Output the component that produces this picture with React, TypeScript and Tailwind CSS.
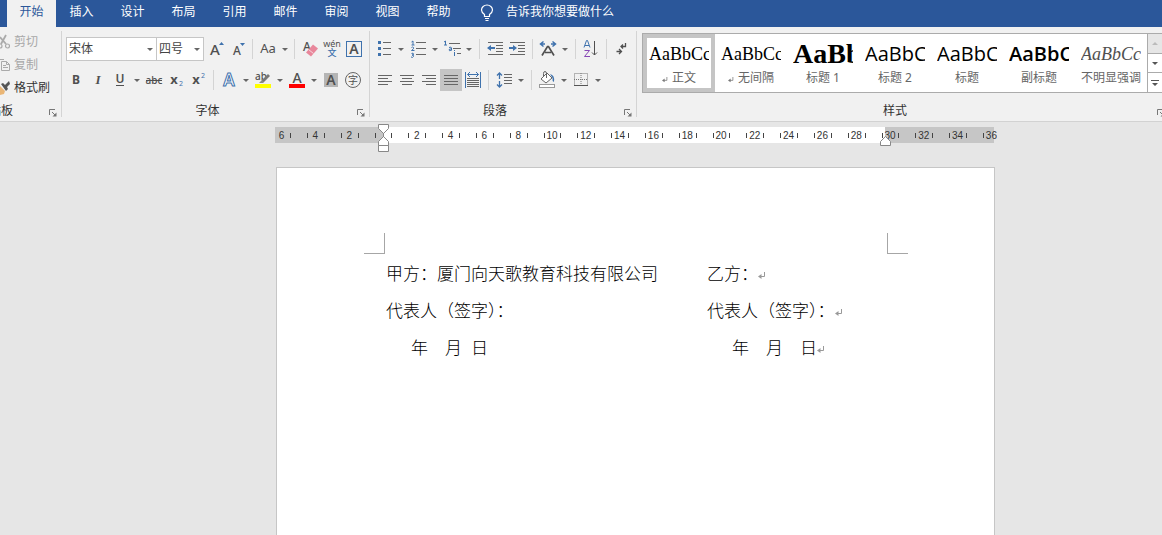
import type { ReactNode } from "react";

const UI = "font-['Noto_Sans','Noto_Sans_CJK_SC',sans-serif]";
const INK = "#505050";
const BLUE = "#3f72ad";

function Icon({ children, w = 22 }: { children: ReactNode; w?: number }) {
  return (
    <svg width={w} height={22} viewBox={`0 0 ${w} 22`} fill="none" className="shrink-0" aria-hidden="true">
      {children}
    </svg>
  );
}

function Caret() {
  return (
    <svg width={12} height={22} viewBox="0 0 12 22" className="shrink-0" aria-hidden="true">
      <path d="M3 10h6l-3 3z" fill="#666" />
    </svg>
  );
}

function Tool({ label, children, caret, active }: { label: string; children: ReactNode; caret?: boolean; active?: boolean }) {
  return (
    <button type="button" aria-label={label} className={`flex h-[22px] shrink-0 items-center ${active ? "bg-[#c5c5c5]" : "hover:bg-[#dcdcdc]"}`}>
      <Icon>{children}</Icon>
      {caret && <Caret />}
    </button>
  );
}

function Sep() {
  return <span className="mx-1 h-[20px] w-px shrink-0 bg-[#d4d4d4]" />;
}

function Launcher({ label }: { label: string }) {
  return (
    <button type="button" aria-label={label} className="flex w-4 shrink-0 justify-center pt-1">
      <svg width={8} height={8} viewBox="0 0 8 8" fill="none" aria-hidden="true">
        <path d="M.5 6V.5H6M3 3l3 3" stroke="#777" />
        <path d="M7.500 3.500v4h-4z" fill="#777" />
      </svg>
    </button>
  );
}

function GroupLabel({ children }: { children: string }) {
  return (
    <div className="flex h-[18px] items-center">
      <span className="flex-1 text-center">{children}</span>
      <Launcher label={`${children}设置`} />
    </div>
  );
}

function Divider() {
  return <div className="mt-1 mb-1 w-px shrink-0 bg-[#d4d4d4]" />;
}

function Combo({ label, value, className }: { label: string; value: string; className: string }) {
  return (
    <label className={`grid h-6 shrink-0 items-center border border-[#c6c6c6] bg-white ${className}`}>
      <span className="sr-only">{label}</span>
      <select defaultValue={value} className="col-start-1 row-start-1 h-[22px] w-full appearance-none bg-transparent pl-0.5 text-[12px] text-[#444] outline-none">
        <option>{value}</option>
      </select>
      <span className="pointer-events-none col-start-1 row-start-1 justify-self-end">
        <Caret />
      </span>
    </label>
  );
}

function Lines({ rows }: { rows: number[][] }) {
  return (
    <>
      {rows.map(([x, y, w], i) => (
        <rect key={i} x={x} y={y} width={w} height={1} fill="#666" />
      ))}
    </>
  );
}

function Glyph({ x, y, size, children, weight = 400, color = INK }: { x: number; y: number; size: number; children: string; weight?: number; color?: string }) {
  return (
    <text x={x} y={y} fontSize={size} fontWeight={weight} fill={color} textAnchor="middle">
      {children}
    </text>
  );
}

function Header() {
  const tabs = ["插入", "设计", "布局", "引用", "邮件", "审阅", "视图", "帮助"];
  return (
    <nav className="flex h-[27px] bg-[#2b579a] pl-[7px] text-[12px] text-white">
      <button type="button" className="h-full w-[49px] shrink-0 bg-[#f1f1f1] pb-1 text-[#2b579a]">开始</button>
      {tabs.map((t) => (
        <button type="button" key={t} className="h-full w-[51px] shrink-0 pb-1">{t}</button>
      ))}
      <button type="button" className="ml-4 flex shrink-0 items-center gap-3 pb-1">
        <svg width={14} height={18} viewBox="0 0 14 18" fill="none" stroke="white" className="mt-0.5" aria-hidden="true">
          <path d="M4.500 12.500v-2C2.500 9 1.500 7.800 1.500 6a5.500 5 0 0 1 11 0c0 1.800-1 3-3 4.500v2zM5 14.500h4M5.500 16.500h3" strokeWidth="1.200" />
        </svg>
        告诉我你想要做什么
      </button>
    </nav>
  );
}

function ClipboardGroup() {
  return (
    <section className="flex w-[61px] shrink-0 flex-col overflow-hidden pt-[3px]">
      <button type="button" className="flex h-[23px] items-center gap-1 text-[#a8a8a8]">
        <svg width={10} height={16} viewBox="0 0 10 16" fill="none" stroke="#aaa" strokeWidth="1.200" aria-hidden="true">
          <path d="M6 1 1 10M0 3l6 7" strokeWidth="1.800" />
          <circle cx="7.500" cy="12" r="2" />
          <circle cx="0" cy="12" r="2" />
        </svg>
        剪切
      </button>
      <button type="button" className="flex h-[23px] items-center gap-1 text-[#a8a8a8]">
        <svg width={10} height={16} viewBox="0 0 10 16" fill="none" stroke="#aaa" aria-hidden="true">
          <path d="M1.500 4.500h5l3 3v6h-8zM6.500 4.500v3h3M0 2.500h4M3 8.500h3M3 10.500h5" />
        </svg>
        复制
      </button>
      <button type="button" className="flex h-[23px] items-center gap-1 text-[#333]">
        <svg width={10} height={16} viewBox="0 0 10 16" aria-hidden="true">
          <path d="M0 6l5 5-1 3-4 1z" fill="#eab676" />
          <path d="M1 4l2-1 2 2 4-4 1 3-3 3 1 2-2 2z" fill="#555" />
        </svg>
        格式刷
      </button>
      <div className="mt-[3px] flex h-[18px] items-center">
        <span className="flex w-[13px] shrink-0 justify-end overflow-hidden whitespace-nowrap">剪贴板</span>
        <span className="flex-1" />
        <Launcher label="剪贴板设置" />
      </div>
    </section>
  );
}

function FontGroup() {
  return (
    <section className="flex w-[307px] shrink-0 flex-col pt-[11px]">
      <div className="flex h-[22px] items-center pl-1">
        <Combo label="字体" value="宋体" className="w-[91px]" />
        <Combo label="字号" value="四号" className="w-[47px] border-l-0" />
        <Tool label="增大字号">
          <Glyph x={11} y={17} size={15} weight={500}>A</Glyph>
          <path d="M15 7h5l-2.500-3z" fill={BLUE} />
        </Tool>
        <Tool label="减小字号">
          <Glyph x={11} y={17} size={12} weight={500}>A</Glyph>
          <path d="M14 5h5l-2.500 3z" fill={BLUE} />
        </Tool>
        <Sep />
        <button type="button" aria-label="更改大小写" className="flex h-[22px] w-[33px] shrink-0 items-center">
          <Icon>
            <Glyph x={11} y={15} size={13}>Aa</Glyph>
          </Icon>
          <Caret />
        </button>
        <Sep />
        <Tool label="清除格式">
          <Glyph x={8} y={13} size={12} weight={500}>A</Glyph>
          <path d="m14 6.500 5 4-7 8-5-4z" fill="#e8879b" />
          <path d="m9.500 11.500 5 4" stroke="#f8d5dc" />
        </Tool>
        <Tool label="拼音指南">
          <Glyph x={11} y={9} size={9}>wén</Glyph>
          <Glyph x={11} y={18} size={9} weight={500} color={BLUE}>文</Glyph>
        </Tool>
        <Tool label="字符边框">
          <rect x="3.500" y="3.500" width="15" height="15" stroke={BLUE} />
          <Glyph x={11} y={16} size={14} weight={600}>A</Glyph>
        </Tool>
      </div>
      <div className="mt-[9px] flex h-[22px] items-center pl-[3px]">
        <Tool label="加粗"><Glyph x={11} y={15} size={12} weight={700}>B</Glyph></Tool>
        <Tool label="倾斜">
          <text x={11} y={15} fontSize={13} fontStyle="italic" fontWeight={700} fill={INK} textAnchor="middle" fontFamily="Liberation Serif">I</text>
        </Tool>
        <Tool label="下划线" caret>
          <Glyph x={11} y={14} size={12} weight={600}>U</Glyph>
          <path d="M7 16.500h8" stroke={INK} />
        </Tool>
        <Tool label="删除线">
          <Glyph x={11} y={15} size={10} weight={500}>abc</Glyph>
          <path d="M3 11.500h16" stroke={INK} />
        </Tool>
        <Tool label="下标">
          <Glyph x={9} y={15} size={13} weight={700}>x</Glyph>
          <Glyph x={16} y={17} size={7} color={BLUE}>2</Glyph>
        </Tool>
        <Tool label="上标">
          <Glyph x={9} y={15} size={13} weight={700}>x</Glyph>
          <Glyph x={16} y={9} size={7} color={BLUE}>2</Glyph>
        </Tool>
        <Sep />
        <Tool label="文本效果" caret>
          <text x={11} y={17} fontSize={17} fontWeight={600} fill="#fff" stroke={BLUE} textAnchor="middle">A</text>
        </Tool>
        <Tool label="突出显示颜色" caret>
          <Glyph x={9} y={11} size={10} weight={500}>ab</Glyph>
          <path d="m10 11 6-6 2 2-6 6-3 1z" fill="#777" />
          <path d="m7 14 3-3 2 2-1 1z" fill="#888" />
          <rect x="3" y="15" width="16" height="4" fill="#ff0" />
        </Tool>
        <Tool label="字体颜色" caret>
          <Glyph x={11} y={14} size={14} weight={500}>A</Glyph>
          <rect x="3" y="15" width="16" height="4" fill="#f00" />
        </Tool>
        <Tool label="字符底纹">
          <rect x="4" y="4" width="14" height="14" fill="#b5b5b5" />
          <Glyph x={11} y={16} size={14} weight={600}>A</Glyph>
        </Tool>
        <Tool label="带圈字符">
          <circle cx="11" cy="11" r="7.500" stroke="#666" />
          <Glyph x={11} y={15} size={10}>字</Glyph>
        </Tool>
      </div>
      <div className="mt-[11px]"><GroupLabel>字体</GroupLabel></div>
    </section>
  );
}

function ParagraphGroup() {
  return (
    <section className="flex w-[266px] shrink-0 flex-col pt-[11px]">
      <div className="flex h-[22px] items-center pl-[3px]">
        <Tool label="项目符号" caret>
          <path d="M5 3h3v3H5zM5 9h3v3H5zM5 15h3v3H5z" fill={BLUE} />
          <Lines rows={[[10, 4, 8], [10, 10, 8], [10, 16, 8]]} />
        </Tool>
        <Tool label="编号" caret>
          <path
            d="M4.500 4 6 3v4M4.500 7h3M4.500 9.500q1-1 2 0t-2 3h3M4.500 15.500q2-1 2 .5t-1.500 1q2 0 1.500 1.500t-2.500.5"
            stroke={BLUE}
          />
          <Lines rows={[[9, 4, 10], [9, 10, 10], [9, 16, 10]]} />
        </Tool>
        <Tool label="多级列表" caret>
          <path d="M3 4l1.500-1v4M3 7h3M8 9.500q2.500-1 2.500.5v2.500M10.500 11q-2.500-.5-2.500 1t2.500 0M13.500 12v1M13.500 14v4" stroke={BLUE} />
          <Lines rows={[[8, 5, 11], [12, 10, 8], [16, 15, 4]]} />
        </Tool>
        <Sep />
        <Tool label="减少缩进">
          <Lines rows={[[4, 4, 15], [12, 7, 7], [12, 10, 7], [12, 13, 7], [4, 16, 15]]} />
          <path d="M3 10l4-3v2h4v2H7v2z" fill={BLUE} />
        </Tool>
        <Tool label="增加缩进">
          <Lines rows={[[4, 4, 15], [12, 7, 7], [12, 10, 7], [12, 13, 7], [4, 16, 15]]} />
          <path d="M11 10 7 7v2H3v2h4v2z" fill={BLUE} />
        </Tool>
        <Sep />
        <Tool label="中文版式" caret>
          <path d="M6.500 3.500 3.500 6l3 2.500M3.500 6H8M15.500 3.500l3 2.500-3 2.500M18.500 6H14" stroke={BLUE} strokeWidth="1.500" />
          <path d="m5 17.500 5.500-9h1l5.500 9M8 14.500h6" stroke={INK} strokeWidth="1.700" />
        </Tool>
        <Sep />
        <Tool label="排序">
          <path d="m4 9.500 2.500-7h1l2.500 7M5 7.500h4" stroke={BLUE} />
          <path d="M4.500 12.500h5l-5 6h5.500" stroke="#8747b5" />
          <path d="M14.500 3v14M12 14.500l2.500 2.500 2.500-2.500" stroke={INK} />
        </Tool>
        <Sep />
        <Tool label="显示编辑标记">
          <path d="M14.500 5v3.500H10M12 6.500l-2 2 2 2M5.500 13.500h5M8 11l2.500 2.500L8 16" stroke={INK} strokeWidth="1.300" />
        </Tool>
      </div>
      <div className="mt-[9px] flex h-[22px] items-center pl-1">
        <Tool label="左对齐"><Lines rows={[[4, 6, 14], [4, 9, 10], [4, 12, 14], [4, 15, 10]]} /></Tool>
        <Tool label="居中"><Lines rows={[[4, 6, 14], [6, 9, 10], [4, 12, 14], [6, 15, 10]]} /></Tool>
        <Tool label="右对齐"><Lines rows={[[4, 6, 14], [8, 9, 10], [4, 12, 14], [8, 15, 10]]} /></Tool>
        <Tool label="两端对齐" active><Lines rows={[[4, 6, 14], [4, 9, 14], [4, 12, 14], [4, 15, 14]]} /></Tool>
        <Tool label="分散对齐">
          <path d="M3.500 3v16M18.500 3v16M5.500 5.500h11M8 3 5.500 5.500 8 8M14 3l2.500 2.500L14 8" stroke={BLUE} />
          <Lines rows={[[5, 9, 12], [5, 11, 12], [5, 13, 12], [5, 15, 12], [5, 17, 12]]} />
        </Tool>
        <Sep />
        <Tool label="行距" caret>
          <path d="M6.500 4v6M4 6.500 6.500 4 9 6.500M6.500 12v6M4 15.500 6.500 18 9 15.500" stroke={BLUE} strokeWidth="1.300" />
          <Lines rows={[[11, 5, 8], [11, 8, 8], [11, 11, 8], [11, 14, 8]]} />
        </Tool>
        <Sep />
        <Tool label="底纹" caret>
          <path d="m5 10 6-6 5 5-6 5z" fill="#fff" stroke="#666" />
          <path d="M10.500 9V4.500q0-2-1.500-2t-1.500 2v3" stroke="#666" />
          <path d="M14 5q5 1 4 8-2-1-1.500-4z" fill={BLUE} />
          <rect x="3.500" y="15.500" width="15" height="3" fill="#fff" stroke="#999" />
        </Tool>
        <Tool label="边框" caret>
          <path d="M4.500 4.500h13v12h-13zM11 4v13M4 10.500h14" stroke="#777" strokeDasharray="1 1" />
          <path d="M4 16.500h14" stroke="#555" />
        </Tool>
      </div>
      <div className="mt-[11px]"><GroupLabel>段落</GroupLabel></div>
    </section>
  );
}

function ReturnMark({ className }: { className: string }) {
  return (
    <svg width={8} height={8} viewBox="0 0 8 8" fill="none" className={className} aria-hidden="true">
      <path d="M6.500 0v4.500H2" stroke="currentColor" />
      <path d="M0 4.500 3.500 2v5z" fill="currentColor" />
    </svg>
  );
}

const styles = [
  { name: "正文", mark: true, look: "font-['Liberation_Serif',serif] text-[18px] text-black", text: "AaBbCc" },
  { name: "无间隔", mark: true, look: "font-['Liberation_Serif',serif] text-[18px] text-black", text: "AaBbCc" },
  { name: "标题 1", look: "font-['Liberation_Serif',serif] text-[28px] font-bold text-black", text: "AaBb" },
  { name: "标题 2", look: "font-['Open_Sans',sans-serif] text-[20px] text-black", text: "AaBbC" },
  { name: "标题", look: "font-['Open_Sans',sans-serif] text-[20px] text-black", text: "AaBbC" },
  { name: "副标题", look: "font-['Open_Sans',sans-serif] text-[20px] font-semibold text-black", text: "AaBbC" },
  { name: "不明显强调", look: "font-['Liberation_Serif',serif] text-[18px] italic text-[#505050]", text: "AaBbCc" },
];

function StylesGroup() {
  return (
    <section className="flex w-[532px] shrink-0 flex-col pt-1.5">
      <div className="flex h-[60px] shrink-0 pl-[5px]">
        <div className="flex border border-[#ababab] bg-white">
          {styles.map((s, i) => (
            <button
              type="button"
              key={s.name}
              className={`flex w-[72px] shrink-0 flex-col items-center border-4 ${i === 0 ? "border-[#c5c5c5]" : "border-transparent"}`}
            >
              <span className={`flex h-[32px] w-[60px] items-center overflow-hidden whitespace-nowrap ${s.look}`}>{s.text}</span>
              <span className="flex h-4 items-center gap-1 whitespace-nowrap text-[12px] text-[#666]">
                {s.mark && <ReturnMark className="mt-1 w-1.5 text-[#777]" />}
                {s.name}
              </span>
            </button>
          ))}
        </div>
        <div className="flex w-[15px] flex-col border-y border-r border-[#ababab] bg-white">
          <button type="button" aria-label="上一行" className="flex flex-1 items-center justify-center bg-[#e6e6e6]">
            <svg width={6} height={3} viewBox="0 0 6 3" aria-hidden="true"><path d="M0 3h6L3 0z" fill="#bbb" /></svg>
          </button>
          <button type="button" aria-label="下一行" className="flex flex-1 items-center justify-center border-y border-[#ababab]">
            <svg width={6} height={3} viewBox="0 0 6 3" aria-hidden="true"><path d="M0 0h6L3 3z" fill="#555" /></svg>
          </button>
          <button type="button" aria-label="其他样式" className="flex flex-1 items-center justify-center">
            <svg width={8} height={6} viewBox="0 0 8 6" aria-hidden="true"><path d="M0 0h8v1H0zM1 3h6L4 6z" fill="#555" /></svg>
          </button>
        </div>
      </div>
      <div className="mt-[9px]"><GroupLabel>样式</GroupLabel></div>
    </section>
  );
}

function Ruler() {
  const units = Array.from({ length: 22 }, (_, i) => i * 2 - 6);
  const at = (u: number) => 108 + u * 16.9;
  return (
    <svg width={722} height={32} viewBox="0 0 722 32" fill="none" className="ml-[275px] shrink-0" role="img" aria-label="标尺">
      <rect y="5" width="719" height="16" fill="#c6c6c6" />
      <rect x="108" y="5" width="502" height="16" fill="#fff" />
      {units.map((u) => (
        <g key={u}>
          {u !== 0 && (
            <text x={at(u)} y={17} fontSize={10} fill="#333" textAnchor="middle" fontFamily="Liberation Sans">{Math.abs(u)}</text>
          )}
          {u > -6 && <rect x={Math.round(at(u - 0.5))} y="11" width="1" height="5" fill="#444" />}
          {u < 36 && <rect x={Math.round(at(u + 0.5))} y="11" width="1" height="5" fill="#444" />}
        </g>
      ))}
      <path d="M103.500 2.500h10v4l-5 5-5-5zM103.500 23.500v-4l5-5 5 5v4zM103.500 23.500h10v6h-10z" fill="#fff" stroke="#888" />
      <path d="M108.500 11v4" stroke="#888" />
      <path d="M605.500 23.500v-4l5-5 5 5v4z" fill="#fff" stroke="#888" />
    </svg>
  );
}

function Corner({ side }: { side: "left" | "right" }) {
  return <span className={`size-[21px] border-b border-[#a6a6a6] ${side === "left" ? "border-r" : "border-l"}`} />;
}

function Page() {
  const mark = <ReturnMark className="mt-1.5 text-[#999]" />;
  return (
    <main className="ml-[276px] mt-[13px] flex w-[719px] shrink-0 grow flex-col border border-b-0 border-[#c6c6c6] bg-white pt-[65px]">
      <div className="flex justify-between pr-[86px] pl-[87px]">
        <Corner side="left" />
        <Corner side="right" />
      </div>
      <div className="grid auto-rows-[37px] grid-cols-[321px_1fr] items-center pl-[109px] font-['Noto_Sans_CJK_SC',sans-serif] text-[17px] leading-[36px] font-light whitespace-nowrap text-black">
        <p>甲方：厦门向天歌教育科技有限公司</p>
        <p className="flex items-center">乙方：{mark}</p>
        <p>代表人（签字）：</p>
        <p className="flex items-center">代表人（签字）：{mark}</p>
        <p className="flex pl-[25px]">
          <span className="mr-[17px]">年</span>
          <span className="mr-[9px]">月</span>
          <span>日</span>
        </p>
        <p className="flex items-center pl-[25px]">
          <span className="mr-[17px]">年</span>
          <span className="mr-[17px]">月</span>
          <span>日</span>
          {mark}
        </p>
      </div>
    </main>
  );
}

export default function App() {
  return (
    <div className={`flex min-h-screen flex-col overflow-hidden bg-[#e6e6e6] text-[12px] text-[#333] ${UI}`}>
      <Header />
      <div className="flex h-[95px] overflow-hidden border-b border-[#d2d2d2] bg-[#f1f1f1]">
        <ClipboardGroup />
        <Divider />
        <FontGroup />
        <Divider />
        <ParagraphGroup />
        <Divider />
        <StylesGroup />
      </div>
      <Ruler />
      <Page />
    </div>
  );
}
